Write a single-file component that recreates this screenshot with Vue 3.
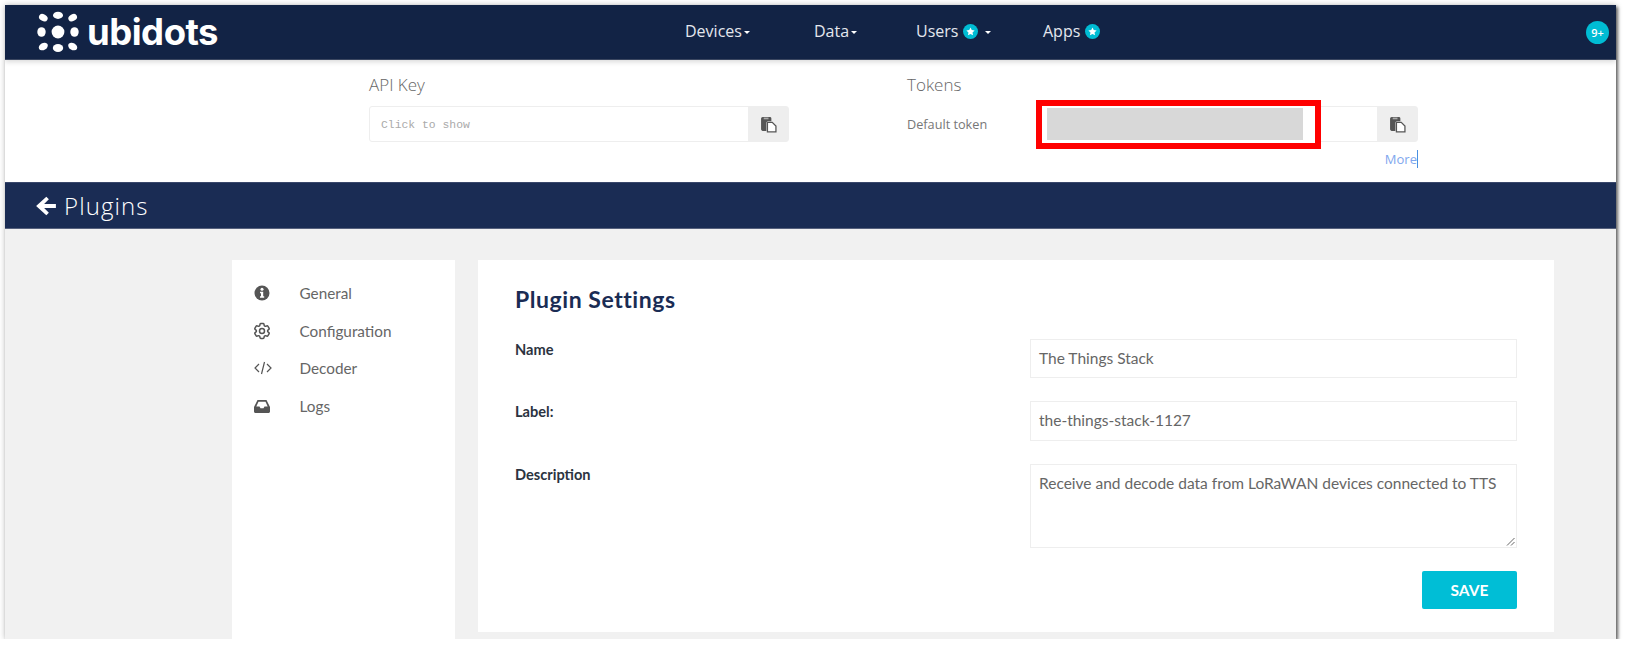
<template>
  <div class="frame">
    <header class="topbar">
      <a class="logo">
        <svg width="42" height="42" viewBox="0 0 42 42" fill="#fff">
          <ellipse cx="6.300" cy="6.700" rx="4.600" ry="3.300" transform="rotate(30 6.300 6.700)" />
          <ellipse cx="21" cy="4.300" rx="5" ry="3.600" />
          <ellipse cx="35.700" cy="6.700" rx="4.600" ry="3.300" transform="rotate(-30 35.700 6.700)" />
          <ellipse cx="4.500" cy="21" rx="4.200" ry="4.800" />
          <circle cx="21" cy="21" r="6.400" />
          <ellipse cx="37.500" cy="21" rx="4.200" ry="4.800" />
          <ellipse cx="6.300" cy="35.500" rx="4.800" ry="3.500" transform="rotate(-30 6.300 35.500)" />
          <ellipse cx="21" cy="37" rx="5.200" ry="4" />
          <ellipse cx="35.700" cy="35.500" rx="4.800" ry="3.500" transform="rotate(30 35.700 35.500)" />
        </svg>
        <span class="logo-text">ubidots</span>
      </a>
      <nav class="nav">
        <a v-for="item in navItems" :key="item.label" class="nav-item" :style="{ width: item.width + 'px' }">
          {{ item.label }}
          <span v-if="item.star" class="star">
            <svg width="9" height="9" viewBox="0 0 24 24" fill="#fff"><path d="M12 1l3.400 7.200 7.600 1-5.600 5.300 1.400 7.800L12 18.500l-6.800 3.800 1.400-7.800L1 9.200l7.600-1z" /></svg>
          </span>
          <i v-if="item.caret" class="caret" :class="{ spaced: item.star }"></i>
        </a>
      </nav>
      <span class="badge">9+</span>
    </header>

    <section class="keys">
      <div class="key-col api">
        <h4>API Key</h4>
        <div class="field">
          <span class="field-text">Click to show</span>
          <button class="copy">
            <svg width="17" height="17" viewBox="0 0 16 16"><path fill="#555" d="M1 2.500C1 1.700 1.700 1 2.500 1h6.800c.8 0 1.400.6 1.400 1.300V5H7.500C6.700 5 6 5.700 6 6.500V14H2.500C1.700 14 1 13.300 1 12.500z" /><path fill="#fff" stroke="#555" stroke-width="1.200" d="M7 6h4.500L15 9.500V15H7z" /><path fill="#aaa" d="M3.500 1.500h4.500v1.600H3.500z" /></svg>
          </button>
        </div>
      </div>
      <div class="key-col tokens">
        <h4>Tokens</h4>
        <div class="token-row">
          <span class="token-label">Default token</span>
          <div class="field token-field">
            <span class="field-text"></span>
            <button class="copy">
              <svg width="17" height="17" viewBox="0 0 16 16"><path fill="#555" d="M1 2.500C1 1.700 1.700 1 2.500 1h6.800c.8 0 1.400.6 1.400 1.300V5H7.500C6.700 5 6 5.700 6 6.500V14H2.500C1.700 14 1 13.300 1 12.500z" /><path fill="#fff" stroke="#555" stroke-width="1.200" d="M7 6h4.500L15 9.500V15H7z" /><path fill="#aaa" d="M3.500 1.500h4.500v1.600H3.500z" /></svg>
            </button>
          </div>
        </div>
        <a class="more">More</a>
      </div>
      <div class="redact"><div class="redact-fill"></div></div>
    </section>

    <div class="titlebar">
      <svg width="22" height="22" viewBox="0 0 20 20" fill="#fff"><path d="M10.300 1.500l2.300 2.300-4.300 4.300H19v3.800H8.300l4.300 4.300-2.300 2.300L1 10z" /></svg>
      <span>Plugins</span>
    </div>

    <div class="content">
      <aside class="side">
        <a v-for="link in links" :key="link.label" class="side-link">
          <span class="side-icon" v-html="link.icon"></span>
          {{ link.label }}
        </a>
      </aside>
      <main class="card">
        <h2>Plugin Settings</h2>
        <div class="form-row">
          <label>Name</label>
          <div class="input">The Things Stack</div>
        </div>
        <div class="form-row">
          <label>Label:</label>
          <div class="input">the-things-stack-1127</div>
        </div>
        <div class="form-row">
          <label>Description</label>
          <div class="input area">
            Receive and decode data from LoRaWAN devices connected to TTS
            <svg class="grip" width="9" height="9" viewBox="0 0 9 9" stroke="#666" fill="none"><path d="M1 8.500L8.500 1M5 8.500L8.500 5" /></svg>
          </div>
        </div>
        <div class="actions"><button class="save">SAVE</button></div>
      </main>
    </div>
  </div>
</template>

<script setup>
const navItems = [
  { label: 'Devices', width: 129, caret: true },
  { label: 'Data', width: 102, caret: true },
  { label: 'Users', width: 127, caret: true, star: true },
  { label: 'Apps', width: 70, star: true },
]

const links = [
  {
    label: 'General',
    icon: '<svg width="16" height="16" viewBox="0 0 16 16"><circle cx="8" cy="8" r="7.500" fill="#555"/><circle cx="8" cy="4.300" r="1.500" fill="#fff"/><path fill="#fff" d="M6 6.800h3.200v4.500h1v1.400H6v-1.400h1V8.200H6z"/></svg>',
  },
  {
    label: 'Configuration',
    icon: '<svg class="gear" width="20" height="20" viewBox="0 0 24 24" fill="none" stroke="#555" stroke-width="1.800" stroke-linejoin="round"><circle cx="12" cy="12" r="3"/><path d="M9.594 3.940c.09-.542.56-.94 1.110-.94h2.593c.55 0 1.020.398 1.110.94l.213 1.281c.063.374.313.686.645.870.074.040.147.083.22.127.325.196.72.257 1.075.124l1.217-.456a1.125 1.125 0 011.370.490l1.296 2.247a1.125 1.125 0 01-.26 1.431l-1.003.827c-.293.241-.438.613-.43.992a7.723 7.723 0 010 .255c-.008.378.137.75.43.991l1.004.827c.424.35.534.955.26 1.430l-1.298 2.247a1.125 1.125 0 01-1.369.491l-1.217-.456c-.355-.133-.75-.072-1.076.124a6.470 6.470 0 01-.22.128c-.331.183-.581.495-.644.869l-.213 1.281c-.09.543-.56.94-1.110.94h-2.594c-.55 0-1.019-.398-1.110-.94l-.213-1.281c-.062-.374-.312-.686-.644-.87a6.520 6.520 0 01-.22-.127c-.325-.196-.72-.257-1.076-.124l-1.217.456a1.125 1.125 0 01-1.369-.49l-1.297-2.247a1.125 1.125 0 01.26-1.431l1.004-.827c.292-.24.437-.613.43-.991a6.932 6.932 0 010-.255c.007-.38-.138-.751-.43-.992l-1.004-.827a1.125 1.125 0 01-.26-1.430l1.297-2.247a1.125 1.125 0 011.370-.491l1.216.456c.356.133.751.072 1.076-.124.072-.044.146-.086.22-.128.332-.183.582-.495.644-.869l.214-1.280z"/></svg>',
  },
  {
    label: 'Decoder',
    icon: '<svg width="18" height="14" viewBox="0 0 18 14" fill="none" stroke="#555" stroke-width="1.200"><path d="M5 3L1 7l4 4M13 3l4 4-4 4M10.500 1L7.500 13"/></svg>',
  },
  {
    label: 'Logs',
    icon: '<svg width="16" height="13" viewBox="0 0 16 13" fill="#555"><path fill-rule="evenodd" d="M3.500 0h9L16 7v4.500c0 .8-.7 1.500-1.500 1.500h-13C.7 13 0 12.300 0 11.500V7zM4.500 1.800L2.300 6.500H5.500l1 1.800h3l1-1.800h3.200l-2.200-4.700z"/></svg>',
  },
]
</script>

<style scoped>
.frame {
  margin: 5px 0 0 5px;
  width: 1611px;
  height: 634px;
  display: flex;
  flex-direction: column;
  overflow: hidden;
  background: #fff;
  box-shadow: 2px 2px 3px rgba(0, 0, 0, 0.55), 0 0 6px rgba(0, 0, 0, 0.25);
  font-family: "Open Sans", sans-serif;
}

.topbar {
  height: 55px;
  flex: none;
  display: flex;
  align-items: center;
  background: #122345;
  border-bottom: 1px solid #3a4660;
  box-sizing: border-box;
  box-shadow: 0 2px 5px rgba(0, 0, 0, 0.15);
  position: relative;
  color: #fff;
}

.logo {
  display: flex;
  align-items: center;
  margin-left: 32px;
  width: 648px;
}

.logo-text {
  margin-left: 8px;
  font-family: Inter, sans-serif;
  font-weight: 700;
  font-size: 36.500px;
  letter-spacing: -0.5px;
  line-height: 42px;
}

.nav {
  display: flex;
  align-items: center;
  margin-top: -2px;
}

.nav-item {
  display: flex;
  align-items: center;
  font-size: 16px;
  color: #e4e7ee;
  white-space: nowrap;
}

.star {
  width: 15px;
  height: 15px;
  border-radius: 50%;
  background: #00bcd4;
  display: inline-flex;
  align-items: center;
  justify-content: center;
  margin-left: 5px;
}

.caret {
  width: 0;
  height: 0;
  margin-left: 2px;
  margin-top: 2px;
  border-top: 3px solid #fff;
  border-left: 3px solid transparent;
  border-right: 3px solid transparent;
}

.caret.spaced {
  margin-left: 7px;
}

.badge {
  margin-left: auto;
  margin-right: 7px;
  width: 23px;
  height: 23px;
  border-radius: 50%;
  background: #00bcd4;
  color: #fff;
  font-size: 11px;
  font-weight: 600;
  display: flex;
  align-items: center;
  justify-content: center;
}

.keys {
  height: 122px;
  flex: none;
  display: flex;
  position: relative;
  box-sizing: border-box;
  padding: 14px 0 0 364px;
}

.keys h4 {
  margin: 0 0 11px;
  font-size: 17px;
  font-weight: 300;
  line-height: 21px;
  color: #666;
}

.api {
  width: 420px;
  margin-right: 118px;
}

.tokens {
  width: 511px;
}

.field {
  height: 36px;
  display: flex;
  border: 1px solid #eee;
  border-radius: 3px;
  box-sizing: border-box;
}

.field-text {
  flex: 1;
  padding-left: 11px;
  font-family: "Liberation Mono", monospace;
  font-size: 11.400px;
  line-height: 36px;
  color: #aaa;
}

.copy {
  width: 40px;
  border: 0;
  padding: 0;
  background: #eee;
  display: flex;
  align-items: center;
  justify-content: center;
}

.token-row {
  display: flex;
  align-items: center;
}

.token-label {
  width: 129px;
  font-size: 12.700px;
  color: #777;
}

.token-field {
  width: 382px;
}

.more {
  display: block;
  margin-top: 8px;
  text-align: right;
  font-size: 13px;
  line-height: 18px;
  color: #7fa7ee;
  border-right: 1px solid #4a90e2;
  width: 511px;
  box-sizing: border-box;
}

.redact {
  position: absolute;
  left: 1031px;
  top: 40px;
  width: 285px;
  height: 49px;
  box-sizing: border-box;
  border: 6px solid #f00;
  background: #fff;
  padding: 2px 12px 3px 5px;
}

.redact-fill {
  height: 100%;
  background: #d8d8d8;
}

.titlebar {
  height: 47px;
  flex: none;
  display: flex;
  align-items: center;
  gap: 7px;
  padding-left: 30px;
  background: #1a2c54;
  border-top: 1px solid #39476b;
  border-bottom: 1px solid #56617d;
  box-sizing: border-box;
  color: #fff;
  font-size: 24px;
  letter-spacing: 1.100px;
  font-weight: 300;
}

.content {
  flex: 1;
  display: flex;
  gap: 23px;
  padding: 31px 0 0 227px;
  background: #f1f1f1;
  min-height: 0;
}

.side {
  width: 223px;
  padding-top: 14px;
  box-sizing: border-box;
  background: #fff;
}

.side-link {
  display: flex;
  align-items: center;
  height: 37.800px;
  padding-left: 22px;
  font-family: Lato, sans-serif;
  font-size: 15.300px;
  color: #666;
}

.side-icon {
  width: 45.500px;
  display: flex;
  align-items: center;
}

.side-icon :deep(.gear) {
  margin-left: -2px;
}

.card {
  width: 1076px;
  height: 372px;
  padding: 24px 37px 0;
  box-sizing: border-box;
  background: #fff;
  color: #2b3340;
  font-family: Lato, sans-serif;
}

.card h2 {
  margin: 0 0 24.800px;
  font-size: 23px;
  letter-spacing: 0.550px;
  line-height: 30px;
  font-weight: 700;
  color: #1a2c54;
}

.form-row {
  display: flex;
  margin-bottom: 23px;
}

.form-row label {
  width: 515px;
  margin-top: -1px;
  font-size: 14.600px;
  font-weight: 700;
  line-height: 24px;
}

.input {
  flex: 1;
  height: 39.500px;
  padding: 0 8px;
  box-sizing: border-box;
  border: 1px solid #eee;
  font-size: 15.500px;
  line-height: 36px;
  color: #666;
}

.area {
  position: relative;
  height: 84.500px;
  line-height: 20px;
  padding-top: 8px;
}

.grip {
  position: absolute;
  right: 1px;
  bottom: 1px;
}

.actions {
  display: flex;
  justify-content: flex-end;
}

.save {
  width: 95px;
  height: 38px;
  border: 0;
  border-radius: 2px;
  background: #00bed6;
  color: #fff;
  font-family: Lato, sans-serif;
  font-size: 15.500px;
  font-weight: 700;
}
</style>
